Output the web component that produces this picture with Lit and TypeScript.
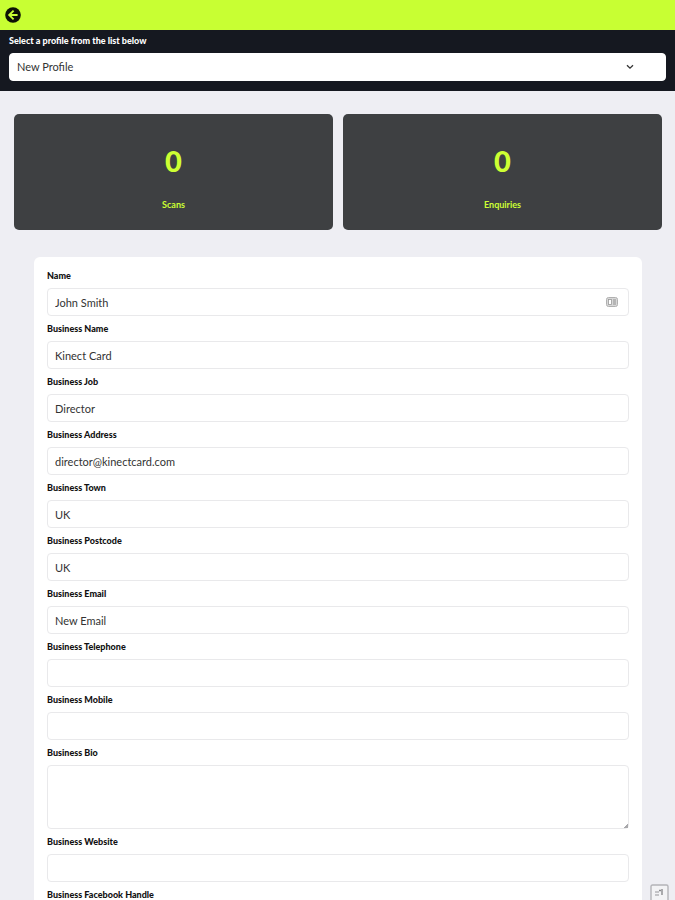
import { LitElement, html, css, nothing } from "lit";
import { customElement, state } from "lit/decorators.js";

interface Field {
  id: string;
  label: string;
  value: string;
  kind?: "area" | "contact";
}

const FIELDS: Field[] = [
  { id: "name", label: "Name", value: "John Smith", kind: "contact" },
  { id: "business-name", label: "Business Name", value: "Kinect Card" },
  { id: "job", label: "Business Job", value: "Director" },
  { id: "address", label: "Business Address", value: "director@kinectcard.com" },
  { id: "town", label: "Business Town", value: "UK" },
  { id: "postcode", label: "Business Postcode", value: "UK" },
  { id: "email", label: "Business Email", value: "New Email" },
  { id: "telephone", label: "Business Telephone", value: "" },
  { id: "mobile", label: "Business Mobile", value: "" },
  { id: "bio", label: "Business Bio", value: "", kind: "area" },
  { id: "website", label: "Business Website", value: "" },
  { id: "facebook", label: "Business Facebook Handle", value: "" },
];

@customElement("stat-card")
class StatCard extends LitElement {
  static properties = { value: { type: Number }, label: { type: String } };
  declare value: number;
  declare label: string;

  static styles = css`
    :host {
      display: flex;
      flex: 1;
      flex-direction: column;
      align-items: center;
      box-sizing: border-box;
      padding: 27px 12px 17px;
      border-radius: 5px;
      background: #3e4042;
      color: #cdff33;
    }
    .value {
      font-size: 29px;
      line-height: 40px;
      font-weight: 900;
    }
    .label {
      margin-top: 16px;
      font-size: 9px;
      line-height: 16px;
      font-weight: 700;
    }
  `;

  render() {
    return html`<div class="value">${this.value}</div>
      <div class="label">${this.label}</div>`;
  }
}

@customElement("app-root")
class AppRoot extends LitElement {
  @state() private fields = FIELDS;

  static styles = css`
    :host {
      display: flex;
      flex-direction: column;
      position: relative;
      height: 100vh;
      overflow: hidden;
      background: #eeeef3;
      color: #111;
      font-family: Lato, "Open Sans", sans-serif;
    }
    * {
      box-sizing: border-box;
    }
    .top {
      flex: none;
      display: flex;
      padding: 7px 5px;
      background: #c8ff33;
    }
    .back {
      display: block;
      width: 16px;
      height: 16px;
      padding: 0;
      border: 0;
      background: none;
      cursor: pointer;
    }
    svg {
      display: block;
    }
    .picker {
      flex: none;
      padding: 5px 9px 10px;
      background: #151820;
      color: #fff;
    }
    .picker label {
      display: block;
      margin-bottom: 6px;
    }
    label {
      font-size: 9px;
      line-height: 12px;
      font-weight: 900;
    }
    .select {
      display: grid;
      align-items: center;
    }
    .select > * {
      grid-area: 1 / 1;
    }
    .select svg {
      justify-self: end;
      margin-right: 32px;
      pointer-events: none;
    }
    select,
    input,
    textarea {
      display: block;
      width: 100%;
      margin: 0;
      padding: 0 7px;
      border: 1px solid #e9e9eb;
      border-radius: 4px;
      background: #fff;
      color: #333;
      font: 400 11px/16px Lato, "Open Sans", sans-serif;
    }
    select {
      appearance: none;
      height: 28px;
      border-color: #fff;
    }
    main {
      flex: 1;
      min-height: 0;
      overflow-y: auto;
      scrollbar-width: none;
      padding: 23px 13px 22px;
    }
    .stats {
      display: flex;
      gap: 10px;
      padding-left: 1px;
    }
    form {
      margin: 27px 20px 0 21px;
      padding: 13px 13px 24px;
      border-radius: 6px;
      background: #fff;
    }
    .field {
      display: flex;
      flex-direction: column;
      gap: 6px;
      margin-bottom: 7px;
    }
    .control {
      display: grid;
      align-items: center;
    }
    .control > * {
      grid-area: 1 / 1;
    }
    .control svg {
      justify-self: end;
      margin-right: 11px;
      pointer-events: none;
    }
    input {
      height: 28px;
    }
    textarea {
      height: 64px;
      padding: 6px 7px;
      resize: vertical;
    }
    textarea::-webkit-resizer {
      background: linear-gradient(135deg, transparent 86%, #a8a8ab 86%);
    }
    .badge {
      position: absolute;
      right: 6px;
      bottom: 0;
      padding: 0;
      border: 0;
      background: none;
    }
  `;

  private renderControl(f: Field) {
    if (f.kind === "area") {
      return html`<textarea id=${f.id} .value=${f.value}></textarea>`;
    }
    return html`<input id=${f.id} type="text" .value=${f.value} />
      ${f.kind === "contact"
        ? html`<svg width="12" height="10" viewBox="0 0 12 10" aria-hidden="true">
            <rect x="0.5" y="0.5" width="11" height="9" rx="2" fill="#d8d8d8" stroke="#b0b0b0" />
            <rect x="2.5" y="2.5" width="3" height="5" fill="#fff" stroke="#999" stroke-width="0.8" />
            <path d="M7 3h3M7 5h3M7 7h3" stroke="#929292" />
          </svg>`
        : nothing}`;
  }

  render() {
    return html`
      <header class="top">
        <button class="back" type="button" aria-label="Back">
          <svg width="16" height="16" viewBox="0 0 16 16">
            <circle cx="8" cy="8" r="7.8" fill="#0d1205" />
            <path d="M8.6 3.6L4.2 8l4.4 4.4M4.6 8h8" fill="none" stroke="#c8ff33" stroke-width="1.9" />
          </svg>
        </button>
      </header>
      <section class="picker">
        <label for="profile">Select a profile from the list below</label>
        <div class="select">
          <select id="profile">
            <option>New Profile</option>
          </select>
          <svg width="8" height="6" viewBox="0 0 8 6" aria-hidden="true">
            <path d="M1 1.2l3 3 3-3" fill="none" stroke="#333" stroke-width="1.3" />
          </svg>
        </div>
      </section>
      <main>
        <section class="stats">
          <stat-card .value=${0} .label=${"Scans"}></stat-card>
          <stat-card .value=${0} .label=${"Enquiries"}></stat-card>
        </section>
        <form>
          ${this.fields.map(
            (f) => html`<div class="field">
              <label for=${f.id}>${f.label}</label>
              <div class="control">${this.renderControl(f)}</div>
            </div>`
          )}
        </form>
      </main>
      <button class="badge" type="button" aria-label="Feedback">
        <svg width="19" height="16" viewBox="0 0 19 16">
          <path d="M1 16V2.5Q1 1 2.5 1h14Q18 1 18 2.5V16" fill="#f3f3f5" stroke="#b4b4b8" stroke-width="1.4" />
          <path d="M5 8h4M5 11h4" stroke="#b5b5b8" stroke-width="1.4" />
          <path d="M9 6.5h2M12 5v6" stroke="#8a8a8e" stroke-width="1.4" />
        </svg>
      </button>
    `;
  }
}
